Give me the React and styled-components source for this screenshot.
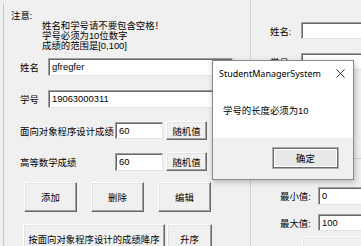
import React from 'react';
import styled, { createGlobalStyle } from 'styled-components';

const GlobalStyle = createGlobalStyle`
  html, body {
    margin: 0;
    padding: 0;
    background: #f0f0f0;
  }
  body {
    font-family: "Liberation Sans", "Noto Sans CJK SC", sans-serif;
    font-size: 9.4px;
    color: #000;
  }
`;

const Screen = styled.div`
  position: relative;
  width: 361px;
  height: 246px;
  overflow: hidden;
  background: #f0f0f0;
  display: flex;
`;

const LeftPane = styled.div`
  margin-left: 3px;
  margin-top: 3px;
  width: 236px;
  border-left: 1px solid #c9c9c9;
  display: flex;
  flex-direction: column;
`;

const Splitter = styled.div`
  width: 1px;
  background: #d2d2d2;
`;

const RightPane = styled.div`
  margin-left: 17px;
  flex: 1;
  border-left: 1px solid #d2d2d2;
  display: flex;
  flex-direction: column;
`;

const Notice = styled.div`
  margin-top: 8px;
  padding-left: 7px;
  line-height: 10px;
`;

const NoticeLines = styled.div`
  padding-left: 31px;
`;

const Row = styled.div`
  display: flex;
  align-items: center;
  height: ${(p) => p.$h || 18}px;
  margin-top: ${(p) => p.$top || 0}px;
  padding-left: ${(p) => p.$left || 0}px;
  gap: ${(p) => p.$gap || 0}px;
`;

const Label = styled.span`
  width: ${(p) => p.$w}px;
  flex-shrink: 0;
  white-space: nowrap;
`;

const Input = styled.div`
  box-sizing: border-box;
  width: ${(p) => p.$w}px;
  height: ${(p) => p.$h || 18}px;
  flex-shrink: 0;
  background: #fff;
  border-top: 1px solid #a0a0a0;
  border-left: 1px solid #a0a0a0;
  border-right: 1px solid #e3e3e3;
  border-bottom: 1px solid #e3e3e3;
  box-shadow: inset 1px 1px 0 #696969;
  padding: 2px 0 0 3px;
  line-height: 12px;
  white-space: nowrap;
  overflow: hidden;
`;

const Button = styled.div`
  box-sizing: border-box;
  width: ${(p) => p.$w}px;
  height: ${(p) => p.$h}px;
  flex-shrink: 0;
  display: flex;
  align-items: center;
  justify-content: center;
  background: #f0f0f0;
  border-top: 1px solid #fff;
  border-left: 1px solid #fff;
  border-right: 1px solid #696969;
  border-bottom: 1px solid #696969;
  box-shadow: inset -1px -1px 0 #a0a0a0, inset 1px 1px 0 #e3e3e3;
  white-space: nowrap;
`;

const GenerateButton = styled(Button)`
  align-self: flex-start;
  margin-top: 5px;
  margin-left: 51px;
`;

const GroupLine = styled.div`
  margin-top: ${(p) => p.$top}px;
  border-top: 1px solid #d2d2d2;
`;

const GroupTitle = styled.div`
  margin-top: 11px;
  padding-left: 28px;
  line-height: 10px;
  color: #333;
`;

const Dialog = styled.div`
  position: absolute;
  left: 212px;
  top: 60px;
  width: 142px;
  height: 120px;
  box-sizing: border-box;
  border: 1px solid #8a8a8a;
  background: #fff;
  box-shadow: 1px 2px 6px rgba(0, 0, 0, 0.25);
  display: flex;
  flex-direction: column;
`;

const TitleBar = styled.div`
  display: flex;
  align-items: center;
  justify-content: space-between;
  height: 24px;
  padding: 0 8px 0 6px;
  font-family: "Noto Sans", "Liberation Sans", sans-serif;
  font-size: 9px;
`;

const CloseIcon = styled.svg`
  width: 9px;
  height: 9px;
`;

const DialogBody = styled.div`
  flex: 1;
  padding: 20px 0 0 10px;
  line-height: 12px;
`;

const DialogFooter = styled.div`
  height: 41px;
  background: #f0f0f0;
  display: flex;
  justify-content: flex-end;
  align-items: flex-start;
  padding: 9px 14px 0 0;
  box-sizing: border-box;
`;

const OkButton = styled(Button)`
  border: 1px solid #adadad;
  box-shadow: inset 0 0 0 1px #6d6d6d, inset 0 0 0 2px #fff;
  background: #e8e8e8;
`;

export default function App() {
  return (
    <>
      <GlobalStyle />
      <Screen>
        <LeftPane>
          <Notice>
            <div>注意:</div>
            <NoticeLines>
              <div>姓名和学号请不要包含空格！</div>
              <div>学号必须为10位数字</div>
              <div>成绩的范围是[0,100]</div>
            </NoticeLines>
          </Notice>

          <Row $top={7} $left={16}>
            <Label $w={28}>姓名</Label>
            <Input $w={185}>gfregfer</Input>
          </Row>
          <Row $top={14} $left={16}>
            <Label $w={28}>学号</Label>
            <Input $w={185}>19063000311</Input>
          </Row>

          <Row $top={13} $left={16} $h={19} $gap={3}>
            <Label $w={92}>面向对象程序设计成绩</Label>
            <Input $w={48} $h={17}>60</Input>
            <Button $w={41} $h={19}>随机值</Button>
          </Row>
          <Row $top={12} $left={16} $h={19} $gap={3}>
            <Label $w={92}>高等数学成绩</Label>
            <Input $w={48} $h={18}>60</Input>
            <Button $w={41} $h={19}>随机值</Button>
          </Row>

          <Row $top={11} $left={20} $h={30} $gap={14}>
            <Button $w={53} $h={30}>添加</Button>
            <Button $w={53} $h={30}>删除</Button>
            <Button $w={53} $h={30}>编辑</Button>
          </Row>

          <Row $top={12} $left={19} $h={30} $gap={2}>
            <Button $w={142} $h={30}>按面向对象程序设计的成绩降序</Button>
            <Button $w={45} $h={30}>升序</Button>
          </Row>
        </LeftPane>

        <Splitter />

        <RightPane>
          <Row $top={22} $left={19} $h={17}>
            <Label $w={31}>姓名:</Label>
            <Input $w={80} $h={17} />
          </Row>
          <Row $top={14} $left={19} $h={17}>
            <Label $w={31}>学号:</Label>
            <Input $w={80} $h={17} />
          </Row>

          <GroupLine $top={88} />
          <GroupTitle>随机数字的范围</GroupTitle>

          <Row $top={7} $left={29} $h={18}>
            <Label $w={38}>最小值:</Label>
            <Input $w={60}>0</Input>
          </Row>
          <Row $top={9} $left={29} $h={17}>
            <Label $w={38}>最大值:</Label>
            <Input $w={60} $h={17}>100</Input>
          </Row>
          <GenerateButton $w={70} $h={20} />
        </RightPane>

        <Dialog>
          <TitleBar>
            <span>StudentManagerSystem</span>
            <CloseIcon viewBox="0 0 10 10">
              <path d="M0.5 0.5 L9.5 9.5 M9.5 0.5 L0.5 9.5" stroke="#222" strokeWidth="1" fill="none" />
            </CloseIcon>
          </TitleBar>
          <DialogBody>学号的长度必须为10</DialogBody>
          <DialogFooter>
            <OkButton $w={67} $h={22}>确定</OkButton>
          </DialogFooter>
        </Dialog>
      </Screen>
    </>
  );
}
